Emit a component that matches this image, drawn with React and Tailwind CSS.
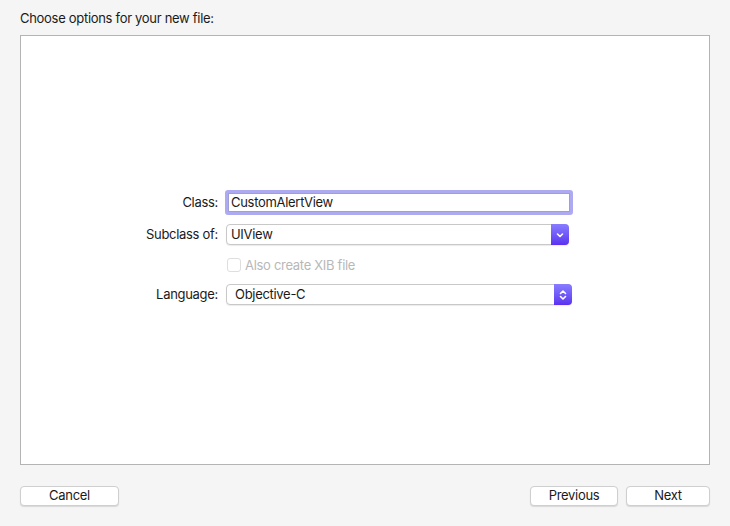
import React from 'react';

const font = { fontFamily: 'Inter, "Noto Sans", sans-serif' };

const Chevron = ({ double }) => (
  <svg width="10" height="12" viewBox="0 0 10 12" fill="none" stroke="white" strokeWidth="1.6" strokeLinecap="round" strokeLinejoin="round">
    {double ? (
      <>
        <path d="M2.5 4.5 L5 2 L7.5 4.5" />
        <path d="M2.5 7.5 L5 10 L7.5 7.5" />
      </>
    ) : (
      <path d="M2.5 5 L5 7.5 L7.5 5" />
    )}
  </svg>
);

const Popup = ({ value, width, double }) => (
  <div
    className="flex h-[21px] items-stretch rounded-[4px] border border-[#c8c8c8] bg-white shadow-[0_1px_1px_rgba(0,0,0,0.08)]"
    style={{ width }}
  >
    <div className={`flex flex-1 items-center text-[13px] text-[#1a1a1a] ${double ? 'pl-[8px]' : 'pl-[4px]'}`}>{value}</div>
    <div className="-my-px -mr-px flex w-[18px] items-center justify-center rounded-r-[4px] bg-gradient-to-b from-[#8a7cff] to-[#5c2ef0]">
      <Chevron double={double} />
    </div>
  </div>
);

const MacButton = ({ children, className = '' }) => (
  <button
    className={`flex h-[20px] items-center justify-center rounded-[4px] border border-[#cfcfcf] bg-white text-[13px] text-[#1a1a1a] shadow-[0_1px_1px_rgba(0,0,0,0.12)] ${className}`}
  >
    {children}
  </button>
);

const Label = ({ children }) => (
  <div className="w-[204px] shrink-0 pr-[7px] text-right text-[13px] text-[#1a1a1a]">{children}</div>
);

export default function App() {
  return (
    <div className="flex h-[526px] w-[730px] flex-col bg-[#f5f5f5] tracking-[-0.3px]" style={font}>
      <div className="pl-[20px] pt-[10px] text-[13px] leading-[16px] text-[#1a1a1a]">Choose options for your new file:</div>

      <div className="mx-[20px] mt-[9px] h-[430px] border border-[#b4b4b4] bg-white pt-[154px]">
        <div className="flex flex-col">
          <div className="flex items-center">
            <Label>Class:</Label>
            <div className="h-[25px] w-[348px] rounded-[3px] border-[3px] border-[#aeaaf2] bg-white">
              <div className="flex h-full items-center border border-[#9e9ed8] pl-[2px] text-[13px] text-[#1a1a1a]">
                CustomAlertView
              </div>
            </div>
          </div>

          <div className="mt-[9px] flex items-center">
            <Label>Subclass of:</Label>
            <div className="ml-px">
              <Popup value="UIView" width={343} />
            </div>
          </div>

          <div className="mt-[13px] flex h-[14px] items-center leading-[14px]">
            <div className="w-[204px] shrink-0" />
            <div className="ml-[2px] flex items-center gap-[4px]">
              <div className="h-[14px] w-[14px] rounded-[3px] border border-[#dedede] bg-white" />
              <span className="text-[13px] text-[#b8b8b8]">Also create XIB file</span>
            </div>
          </div>

          <div className="mt-[12px] flex items-center">
            <Label>Language:</Label>
            <div className="ml-px">
              <Popup value="Objective-C" width={346} double />
            </div>
          </div>
        </div>
      </div>

      <div className="mt-[21px] flex px-[20px]">
        <MacButton className="w-[99px]">Cancel</MacButton>
        <div className="flex-1" />
        <MacButton className="w-[88px]">Previous</MacButton>
        <MacButton className="ml-[8px] w-[84px]">Next</MacButton>
      </div>
    </div>
  );
}
